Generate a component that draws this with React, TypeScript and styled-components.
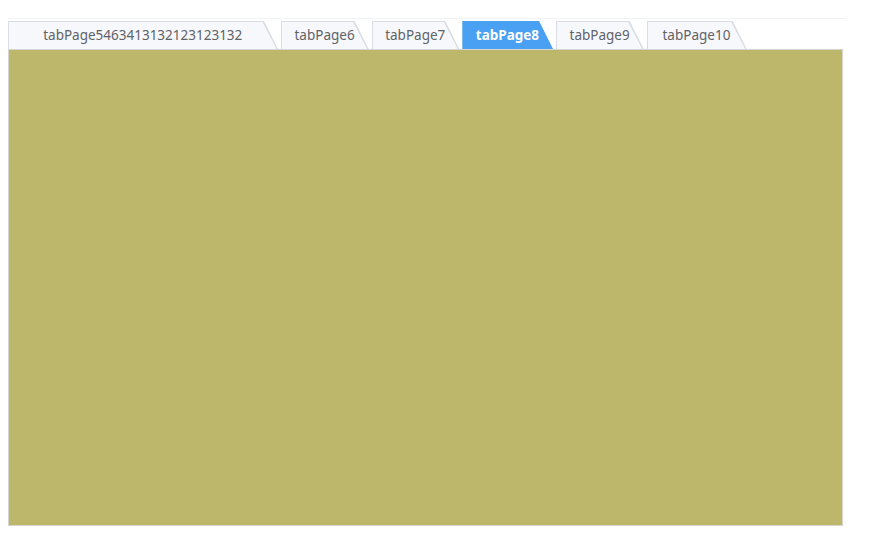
import styled, { createGlobalStyle, css } from 'styled-components'

const GlobalStyle = createGlobalStyle`
  body {
    margin: 8px;
    background: #ffffff;
    font-family: "Noto Sans", "Open Sans", sans-serif;
  }
`

const TabControl = styled.div`
  width: 838px;
  margin-top: 10px;
  border-top: 1px solid #f1f2f4;
`

const TabStrip = styled.div`
  display: flex;
  align-items: flex-end;
  gap: 3px;
  padding-top: 2px;
`

const SLANT = 14

const Tab = styled.div<{ $active?: boolean; $width?: number }>`
  position: relative;
  box-sizing: border-box;
  height: 28px;
  padding: 0 14px 0 13.5px;
  ${({ $width }) => $width && css`width: ${$width}px;`}
  display: flex;
  align-items: center;
  justify-content: center;
  font-size: 13.5px;
  white-space: nowrap;
  color: ${({ $active }) => ($active ? '#ffffff' : '#5f6368')};
  font-weight: ${({ $active }) => ($active ? 700 : 400)};
  cursor: pointer;

  &::before,
  &::after {
    content: '';
    position: absolute;
  }

  &::before {
    inset: 0;
    background: ${({ $active }) => ($active ? '#4aa0f2' : '#d9dde4')};
    clip-path: polygon(0 0, calc(100% - ${SLANT}px) 0, 100% 100%, 0 100%);
  }

  &::after {
    inset: 1px 1px 0 1px;
    background: ${({ $active }) => ($active ? '#4aa0f2' : '#f7f8fc')};
    clip-path: polygon(0 0, calc(100% - ${SLANT + 0.5}px) 0, calc(100% - 0.5px) 100%, 0 100%);
  }
`

const TabLabel = styled.span`
  position: relative;
  z-index: 1;
`

const Page = styled.div`
  box-sizing: border-box;
  width: 835px;
  height: 477px;
  background: #bdb76b;
  border: 1px solid #d6d6d0;
  box-shadow: 0 0 2px rgba(0, 0, 0, 0.06);
`

const tabs = [
  { label: 'tabPage5463413132123123132', width: 270 },
  { label: 'tabPage6' },
  { label: 'tabPage7' },
  { label: 'tabPage8', active: true },
  { label: 'tabPage9' },
  { label: 'tabPage10', width: 100 },
]

export default function App() {
  return (
    <>
      <GlobalStyle />
      <TabControl>
        <TabStrip>
          {tabs.map((t) => (
            <Tab key={t.label} $active={t.active} $width={t.width}>
              <TabLabel>{t.label}</TabLabel>
            </Tab>
          ))}
        </TabStrip>
        <Page />
      </TabControl>
    </>
  )
}
